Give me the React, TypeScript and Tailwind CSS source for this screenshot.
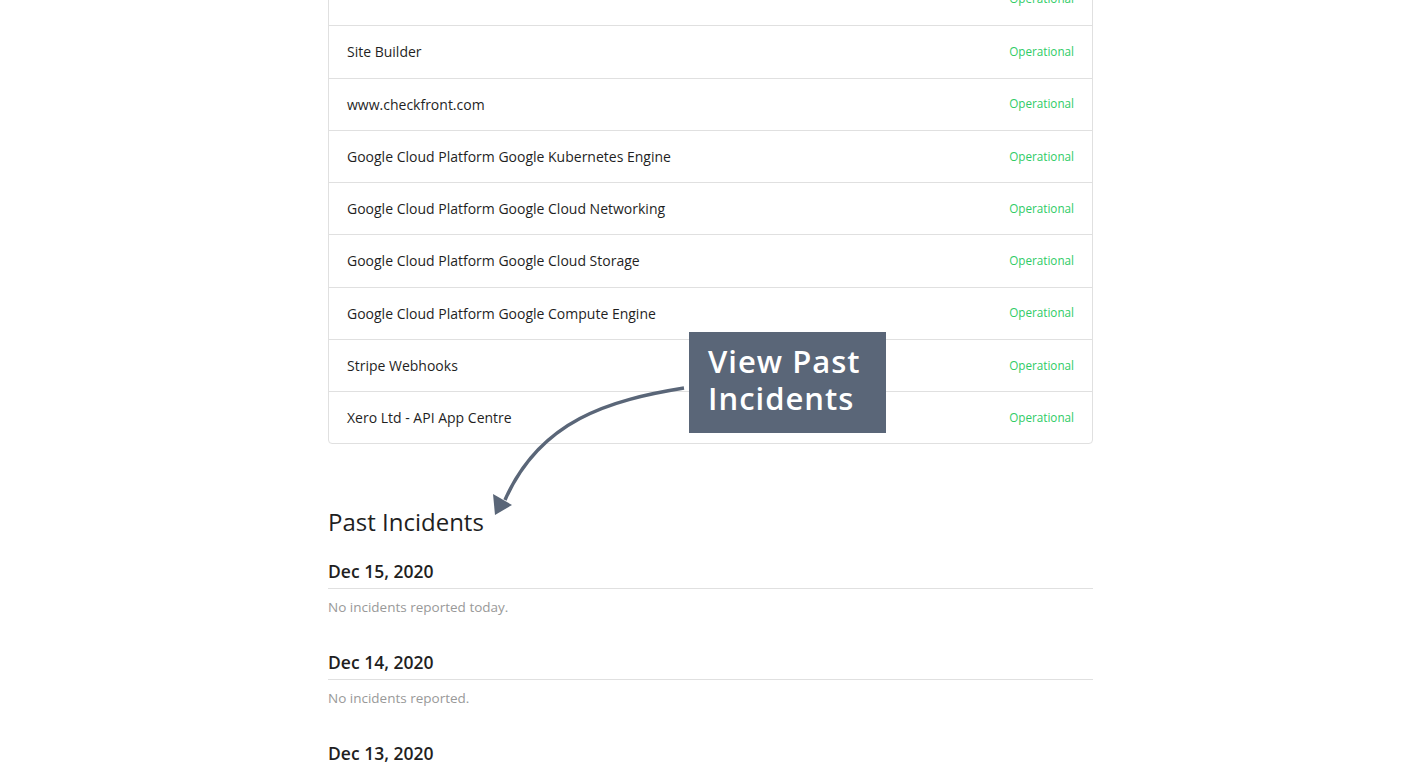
import React from "react";

const rows = [
  "Hidden",
  "Site Builder",
  "www.checkfront.com",
  "Google Cloud Platform Google Kubernetes Engine",
  "Google Cloud Platform Google Cloud Networking",
  "Google Cloud Platform Google Cloud Storage",
  "Google Cloud Platform Google Compute Engine",
  "Stripe Webhooks",
  "Xero Ltd - API App Centre",
];

const days = [
  { d: "Dec 15, 2020", t: "No incidents reported today." },
  { d: "Dec 14, 2020", t: "No incidents reported." },
  { d: "Dec 13, 2020", t: "" },
];

export default function App() {
  return (
    <div
      className="relative w-[1417px] h-[763px] overflow-hidden bg-white text-[#222]"
      style={{ fontFamily: "'Open Sans', Lato, sans-serif" }}
    >
      <div className="w-[765px] ml-[328px] mt-[-28px]">
        <div className="border border-[#e0e0e0] rounded-b-[4px]">
          {rows.map((r, i) => (
            <div
              key={i}
              className={`flex items-center justify-between h-[52.25px] pl-[18px] pr-[18px] ${
                i > 0 ? "border-t border-[#e0e0e0]" : ""
              }`}
            >
              <span className={`text-[14px] text-[#1f1f1f] ${i === 0 ? "invisible" : ""}`}>{r}</span>
              <span className="text-[11.7px] text-[#2fcc66]">Operational</span>
            </div>
          ))}
        </div>

        <h2 className="mt-[63px] text-[24px] leading-[30px] font-medium text-[#1f1f1f]">Past Incidents</h2>

        <div className="mt-[23px]">
          {days.map((x, i) => (
            <div key={i} className="mb-[35px]">
              <div className="text-[17.5px] leading-[22px] font-semibold text-[#1f1f1f] pb-[6px] border-b border-[#e0e0e0]">
                {x.d}
              </div>
              <div className="pt-[9px] text-[13.5px] leading-[18px] text-[#999]">{x.t}</div>
            </div>
          ))}
        </div>
      </div>

      <svg
        className="absolute left-0 top-0 pointer-events-none"
        width="1417"
        height="763"
        viewBox="0 0 1417 763"
      >
        <path
          d="M684 388 C 610 400, 540 420, 505 500"
          fill="none"
          stroke="#5a6678"
          strokeWidth="3.5"
        />
        <polygon points="495,515 493,494 512,505" fill="#5a6678" />
      </svg>

      <div
        className="absolute left-[689px] top-[332px] w-[197px] h-[101px] bg-[#5a6678] text-white pl-[19px] pt-[11px] text-[31px] leading-[37px] font-semibold tracking-[1px]"
        style={{ fontFamily: "'Open Sans', sans-serif" }}
      >
        View Past
        <br />
        Incidents
      </div>
    </div>
  );
}
